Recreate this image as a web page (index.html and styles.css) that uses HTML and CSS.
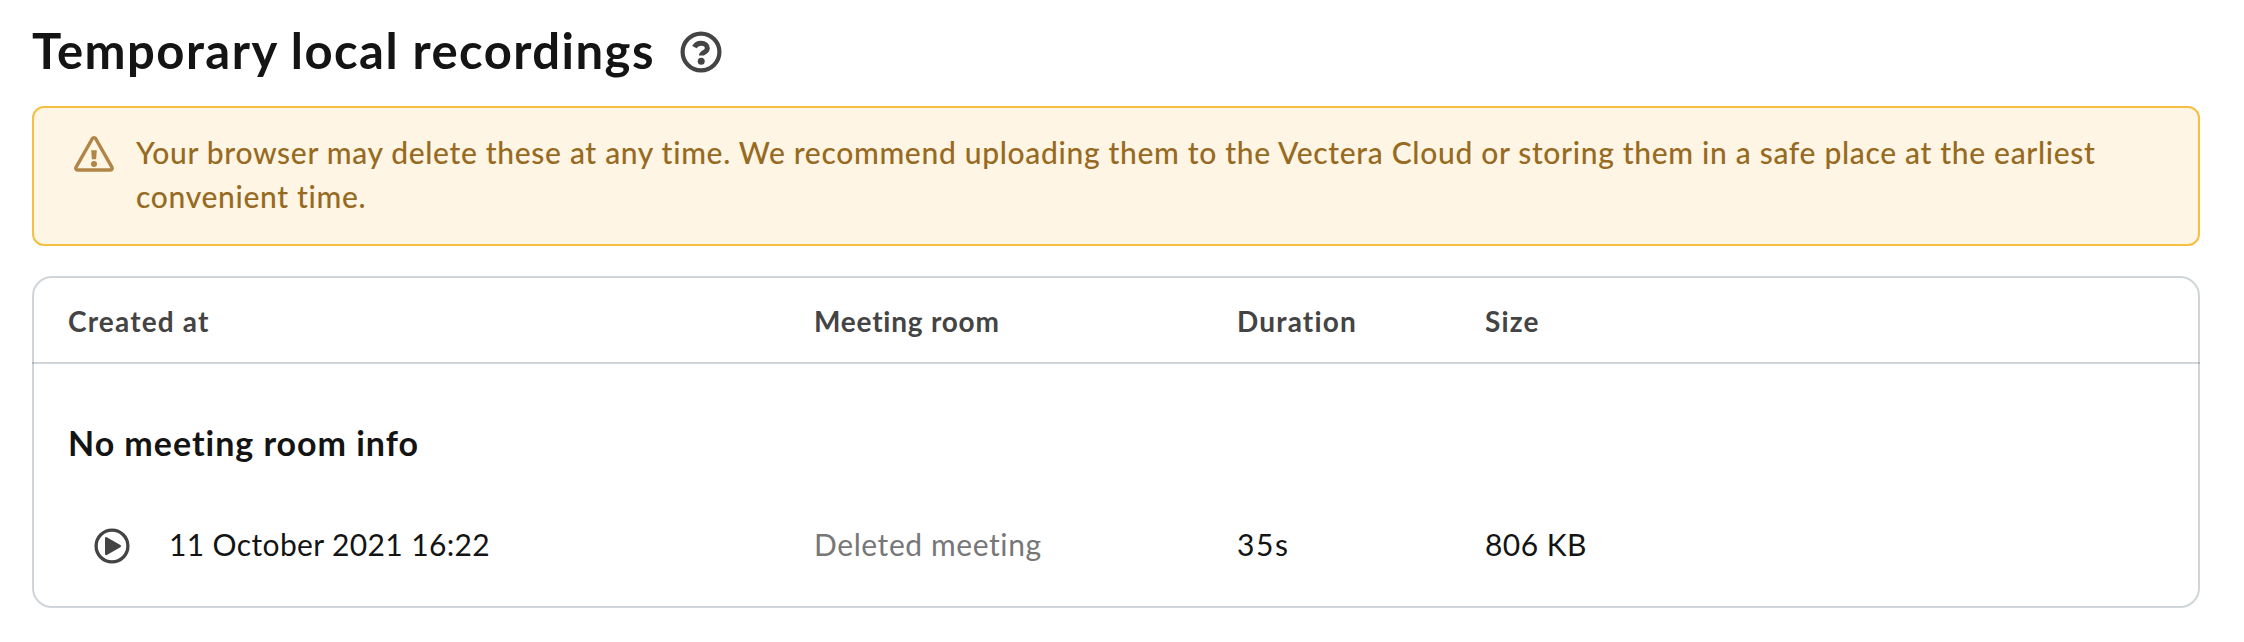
FILE: index.html
```
<!DOCTYPE html>
<html>
<head>
    <meta charset="UTF-8">
    <title>Temporary local recordings</title>
    <link rel="stylesheet" href="styles.css">
</head>
<body>
<div class="page-header">
    <h1>Temporary local recordings</h1>
    <svg class="help-icon" width="42" height="42" viewBox="0 0 42 42">
        <circle cx="21" cy="21" r="18.4" fill="none" stroke="#444" stroke-width="4.2"/>
        <path d="M14.4 16.2c1.4-2.7 3.6-3.9 6.6-3.9 3.9 0 6.3 1.9 6.3 4.9 0 4.4-5.9 3.8-5.9 7.4" fill="none" stroke="#444" stroke-width="5"/>
        <circle cx="21.2" cy="30.2" r="3.5" fill="#444"/>
    </svg>
</div>

<div class="alert">
    <svg class="alert-icon" width="42" height="38" viewBox="0 0 42 38">
        <path d="M19.4 3.5a1.9 1.9 0 0 1 3.2 0L39 32.3a1.8 1.8 0 0 1-1.5 2.7h-33A1.8 1.8 0 0 1 3 32.3z" fill="none" stroke="#b18545" stroke-width="3.4" stroke-linejoin="round"/>
        <path d="M18.2 15.3h5.6l-.7 9h-4.2z" fill="#b18545"/>
        <circle cx="21" cy="28.9" r="3" fill="#b18545"/>
    </svg>
    <div class="alert-text">Your browser may delete these at any time. We recommend uploading them to the Vectera Cloud or storing them in a safe place at the earliest convenient time.</div>
</div>

<div class="recordings">
    <div class="recordings-row recordings-head">
        <div class="created">Created at</div>
        <div class="room">Meeting room</div>
        <div class="duration">Duration</div>
        <div class="size">Size</div>
    </div>
    <h2>No meeting room info</h2>
    <div class="recordings-row recording">
        <div class="created">
            <svg class="play-icon" width="36" height="36" viewBox="0 0 36 36">
                <circle cx="18" cy="18" r="15.9" fill="none" stroke="#444" stroke-width="3.3"/>
                <path d="M12.2 10.2l13.6 7.9-13.6 7.9z" fill="#444" stroke="#444" stroke-width="2.4" stroke-linejoin="round"/>
            </svg>
            <span>11 October 2021 16:22</span>
        </div>
        <div class="room">Deleted meeting</div>
        <div class="duration">35s</div>
        <div class="size">806 KB</div>
    </div>
</div>
</body>
</html>
```

FILE: styles.css
```
body {
    margin: 0;
    padding: 17px 44px 0 32px;
    font-family: Lato, "Open Sans", sans-serif;
    font-size: 30px;
    color: #141414;
    background-color: #fff;
}

h1 {
    margin: 0;
    font-size: 49px;
    line-height: 66px;
    letter-spacing: 1.45px;
}

h2 {
    margin: 0;
    padding: 57px 34px 21px;
    font-size: 34px;
    line-height: 44px;
    letter-spacing: 0.97px;
}

.page-header {
    display: flex;
    align-items: center;
    gap: 25px;
    margin-bottom: 23px;
}

.help-icon {
    margin-top: 4px;
}

.alert {
    display: flex;
    gap: 21px;
    padding: 22px 40px 26px 39px;
    margin-bottom: 30px;
    border: 2px solid #f5c042;
    border-radius: 12px;
    background-color: #fef5e4;
    color: #976a22;
}

.alert-icon {
    flex: none;
    margin-top: 5px;
}

.alert-text {
    font-weight: 500;
    line-height: 44px;
    letter-spacing: 0.675px;
}

.recordings {
    border: 2px solid rgba(95, 115, 125, 0.3);
    border-radius: 20px;
}

.recordings-row {
    display: grid;
    grid-template-columns: 746px 423px 248px 1fr;
    align-items: center;
    padding: 0 34px;
}

.recordings-head {
    height: 82px;
    margin: 0 -2px;
    padding: 2px 36px 0;
    border-bottom: 2px solid rgba(95, 115, 125, 0.3);
    font-size: 28px;
    font-weight: bold;
    letter-spacing: 1.17px;
    color: #444;
}

.recordings-head .room {
    letter-spacing: 0.78px;
}

.recording {
    height: 120px;
    letter-spacing: 0.45px;
}

.recording .created {
    display: flex;
    align-items: center;
    gap: 39px;
    padding-left: 26px;
    letter-spacing: 0.37px;
}

.recording span,
.recording .room,
.recording .duration,
.recording .size {
    padding-bottom: 4px;
}

.recording .room {
    letter-spacing: 0.59px;
    color: #777;
}

.recording .duration {
    letter-spacing: 1.6px;
}
```
